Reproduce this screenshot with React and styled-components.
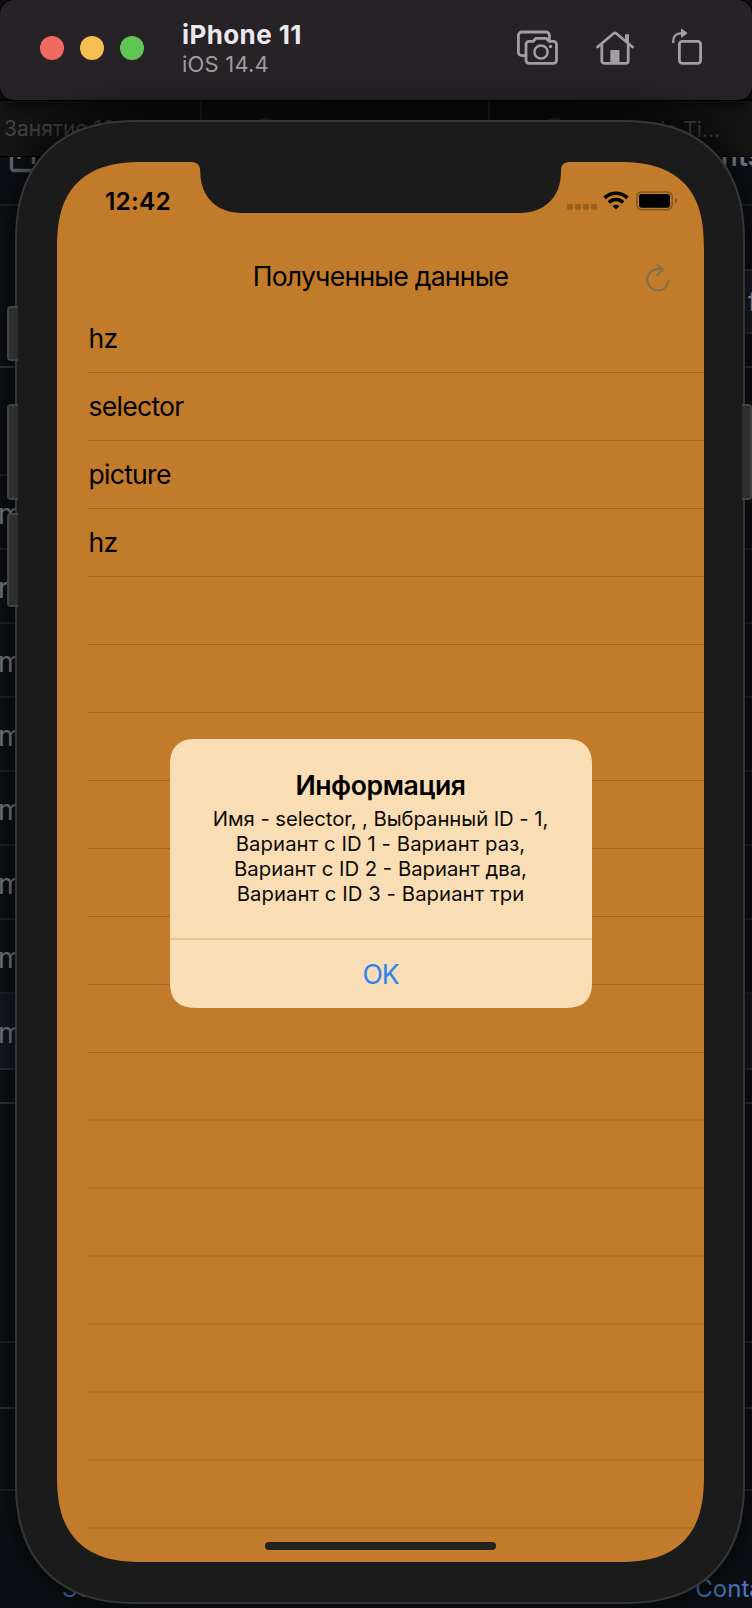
import React from "react";
import styled, { createGlobalStyle } from "styled-components";

const Global = createGlobalStyle`
  * { box-sizing: border-box; }
  body { margin: 0; background: #000; font-family: Inter, "Liberation Sans", sans-serif; }
`;

/* The desktop and the simulator share one grid cell, the simulator on top. */
const Stage = styled.main`
  display: grid;
  grid-template: 1608px / 752px;
  overflow: hidden;
  height: 1608px;
  > * { grid-area: 1 / 1; min-width: 0; }
`;

/* ---------- browser window in the back ---------- */
const Browser = styled.div`
  display: flex;
  flex-direction: column;
  padding-top: 99px;
  overflow: hidden;
  background: #0d1116;
`;

const TabStrip = styled.div`
  display: flex;
  flex: none;
  height: 58px;
  background: linear-gradient(90deg, #171617, #0d0d0d 25%, #0c0c0c 75%, #161616);
  border-top: 2px solid #000;
  border-bottom: 1px solid #000;
  color: #464646;
  font-size: 21px;
  line-height: 58px;
  white-space: nowrap;
`;

const Tab = styled.div`
  display: flex;
  align-items: ${(p) => (p.$favicon ? "flex-start" : "center")};
  justify-content: ${(p) => p.$justify || "flex-start"};
  width: ${(p) => p.$width}px;
  padding: 0 ${(p) => p.$right || 0}px 0 ${(p) => p.$left || 0}px;
  border-right: ${(p) => (p.$last ? 0 : 2)}px solid #222;
`;

const Favicon = styled.i`
  width: 28px;
  height: 28px;
  margin-top: 17px;
  border-radius: 50%;
  background: #2a2a2a;
`;

const PageRow = styled.div`
  display: flex;
  flex: none;
  justify-content: space-between;
  align-items: ${(p) => p.$align || "center"};
  height: ${(p) => p.$height}px;
  overflow: hidden;
  background: ${(p) => (p.$active ? "#161c23" : "transparent")};
  border-bottom: 2px solid ${(p) => (p.$strong ? "#33373d" : "#22262c")};
`;

const CommitText = styled.span`
  margin-left: -2px;
  padding-top: 4px;
  color: #858d97;
  font-size: 28px;
  line-height: 40px;
`;

const BoxGlyph = styled.svg`
  display: block;
  margin-left: 8px;
`;

const Heading = styled.span`
  margin: -15px -11px 0 0;
  color: #818b96;
  font-size: 28px;
  font-weight: 600;
  line-height: 28px;
`;

const FieldBox = styled.div`
  width: 12px;
  height: 65px;
  margin-top: 63px;
  padding-left: 8px;
  overflow: hidden;
  background: #1a2027;
  border: 2px solid #30353c;
  border-width: 2px 0;
  color: #aab2bb;
  font-size: 26px;
  font-weight: 500;
  line-height: 61px;
`;

const PageFooter = styled.div`
  display: flex;
  flex: 1;
  align-items: flex-start;
  justify-content: space-between;
  padding: 83px 0 0 62px;
  color: #4c82c6;
  font-size: 24px;
  line-height: 29px;
`;

const FooterLink = styled.span`
  margin-right: ${(p) => p.$overflow || 0}px;
`;

/* ---------- simulator ---------- */
const Simulator = styled.section`
  display: flex;
  flex-direction: column;
`;

const Toolbar = styled.header`
  display: flex;
  flex: none;
  align-items: center;
  height: 100px;
  padding: 0 50px 4px 40px;
  background: #262226;
  border-radius: 14px;
  box-shadow: 0 0 0 1px #000, 0 6px 18px rgba(0, 0, 0, 0.6);
`;

const Lights = styled.div`
  display: flex;
  gap: 16px;
  margin-right: 38px;
`;

const Light = styled.i`
  width: 24px;
  height: 24px;
  border-radius: 50%;
  background: ${(p) => p.$color};
`;

const DeviceLabel = styled.div`
  display: flex;
  flex: 1;
  flex-direction: column;
  padding-top: 3px;
`;

const DeviceName = styled.strong`
  color: #ebe9eb;
  font-size: 26px;
  font-weight: 700;
  letter-spacing: 0.4px;
  line-height: 29px;
`;

const DeviceOS = styled.span`
  color: #a09ba0;
  font-size: 22px;
  letter-spacing: 0.2px;
  line-height: 30px;
`;

const ToolIcons = styled.div`
  display: flex;
  align-items: center;
  gap: 35px;
  svg { display: block; }
`;

const Phone = styled.div`
  position: relative;
  width: 730px;
  height: 1484px;
  margin: 20px 0 0 15px;
  padding: 40px;
  background: #1b1b1b;
  border: 2px solid #363636;
  border-radius: 122px;
  corner-shape: superellipse(1.24);
  box-shadow: 0 0 36px 8px rgba(0, 0, 0, 0.6);
`;

/* Hardware keys stick out over the edge of the case. */
const SideKey = styled.i`
  position: absolute;
  top: ${(p) => p.$top}px;
  ${(p) => (p.$side === "left" ? "left: -10px;" : "right: -9px;")}
  width: ${(p) => (p.$side === "left" ? 11 : 10)}px;
  height: ${(p) => p.$height}px;
  background: #2e2e2e;
  border: 2px solid #424242;
  border-${(p) => (p.$side === "left" ? "right" : "left")}-width: 0;
  border-radius: ${(p) => (p.$side === "left" ? "4px 0 0 4px" : "0 4px 4px 0")};
`;

const Screen = styled.div`
  display: grid;
  grid-template: 1400px / 647px;
  width: 647px;
  height: 1400px;
  overflow: hidden;
  background: #c27b2a;
  border-radius: 88px;
  corner-shape: superellipse(1.38);
  > * { grid-area: 1 / 1; }
`;

const AppView = styled.div`
  display: flex;
  flex-direction: column;
`;

const StatusBar = styled.div`
  display: flex;
  height: 51px;
`;

const Clock = styled.div`
  width: 133px;
  padding: 27px 0 0 48px;
  font-size: 24.5px;
  font-weight: 600;
  line-height: 24px;
  letter-spacing: 0.2px;
`;

const NotchShape = styled.svg`
  display: block;
  flex: none;
`;

const Indicators = styled.div`
  display: flex;
  align-items: flex-start;
  margin-left: -4px;
  padding-top: 29px;
  svg { display: block; flex: none; }
`;

const SignalDots = styled.div`
  display: flex;
  gap: 2px;
  margin: 13px 6px 0 0;
`;

const Dot = styled.i`
  width: 6px;
  height: 6px;
  border-radius: 1.5px;
  background: #9b6323;
`;

const NavBar = styled.nav`
  display: grid;
  grid-template-columns: 60px 1fr 60px;
  align-items: center;
  height: 92px;
  padding-top: 34px;
  text-align: center;
`;

const NavTitle = styled.h1`
  margin: 0;
  font-size: 26.6px;
  font-weight: 400;
  letter-spacing: -0.75px;
  line-height: 32px;
  grid-column: 2;
`;

const RefreshIcon = styled.svg`
  display: block;
  margin: 3px 0 0 1px;
`;

const Row = styled.div`
  height: 68px;
  margin-left: 31px;
  padding-left: 0.5px;
  border-bottom: ${(p) => (p.$soft ? "2px solid #b37228" : "1px solid #9d6728")};
  font-size: 26.6px;
  letter-spacing: -0.75px;
  line-height: 67px;
`;

const HomeArea = styled.div`
  display: flex;
  justify-content: center;
  padding-top: 12.5px;
`;

const HomeIndicator = styled.i`
  width: 231px;
  height: 8px;
  border-radius: 4px;
  background: #222;
`;

const Alert = styled.div`
  display: flex;
  flex-direction: column;
  justify-self: center;
  width: 422px;
  height: 269.500px;
  margin-top: 576.500px;
  background: #f8ddb5;
  border-radius: 26px;
  corner-shape: superellipse(1.3);
  overflow: hidden;
  text-align: center;
`;

const AlertBody = styled.div`
  height: 199.500px;
  padding-top: 30.500px;
`;

const AlertTitle = styled.h2`
  margin: 0 0 5px;
  font-size: 26.6px;
  font-weight: 600;
  letter-spacing: -0.4px;
  line-height: 32px;
`;

const AlertLine = styled.div`
  color: #0c0b09;
  font-size: 20.3px;
  letter-spacing: ${(p) => p.$spacing}px;
  line-height: 25px;
`;

const AlertButton = styled.button`
  flex: 1;
  padding: 0;
  background: none;
  border: 0;
  border-top: 2px solid #e8c590;
  color: #2b83f4;
  font: 400 26.6px Inter, sans-serif;
  letter-spacing: -1px;
`;

const commits = ["m", "r", "m", "m", "m", "m", "m", "m"];
const records = ["hz", "selector", "picture", "hz"];
const ROWS = 18;

const message = [
  ["Имя - selector, , Выбранный ID - 1,", -0.06],
  ["Вариант с ID 1 - Вариант раз,", 0.08],
  ["Вариант с ID 2 - Вариант два,", 0],
  ["Вариант с ID 3 - Вариант три", 0.07],
];

function BackWindow() {
  return (
    <Browser>
      <TabStrip>
        <Tab $width={202} $left={4}>Занятие 10</Tab>
        <Tab $width={288} $left={50} $favicon><Favicon /></Tab>
        <Tab $width={262} $left={51} $right={32} $justify="space-between" $favicon $last>
          <Favicon /><span>Google Ti...</span>
        </Tab>
      </TabStrip>
      <PageRow $height={49} $align="flex-start">
        <BoxGlyph width="36" height="18" fill="none" stroke="#69717b" strokeWidth="3.4">
          <path d="M3.5 0v11a2.5 2.5 0 0 0 2.5 2.5h27M25.500 0v7M11 0v2" />
        </BoxGlyph>
        <Heading>ents</Heading>
      </PageRow>
      <PageRow $height={162} $strong $align="flex-start">
        <span />
        <FieldBox>f</FieldBox>
      </PageRow>
      <PageRow $height={108} />
      {commits.map((text, i) => (
        <PageRow key={i} $height={i === 7 ? 76 : 74} $active={i === 7} $strong={i === 7}>
          <CommitText>{text}</CommitText>
        </PageRow>
      ))}
      <PageRow $height={34} $strong />
      <PageRow $height={239} />
      <PageRow $height={66} $strong />
      <PageRow $height={82} />
      <PageFooter>
        <FooterLink>Sc</FooterLink>
        <FooterLink $overflow={-66}>Contact us</FooterLink>
      </PageFooter>
    </Browser>
  );
}

function ToolbarIcons() {
  return (
    <ToolIcons>
      <svg width="46" height="40" viewBox="514 28 46 40" fill="none" stroke="#a39ea3" strokeWidth="2.8">
        <path d="M525 55.600h-3.200a3.400 3.400 0 0 1-3.400-3.400V35.400a3.400 3.400 0 0 1 3.400-3.400h24.200a3.400 3.400 0 0 1 3.400 3.400V40" />
        <path d="M529 41.400h4.200l2-2.400a2 2 0 0 1 1.500-.7h8.800a2 2 0 0 1 1.500.7l2 2.400h4.500a3 3 0 0 1 3 3v15.900a3 3 0 0 1-3 3H529a3 3 0 0 1-3-3V44.400a3 3 0 0 1 3-3z" strokeLinejoin="round" />
        <circle cx="541" cy="52" r="6.600" strokeWidth="2.500" />
        <circle cx="550.500" cy="46.500" r="1.700" fill="#a39ea3" stroke="none" />
      </svg>
      <svg width="40" height="40" viewBox="595 28 40 40" fill="none" stroke="#a39ea3" strokeWidth="2.800" strokeLinecap="round">
        <path d="M597.500 47 L613.900 33.300a1.800 1.800 0 0 1 2.200 0L632.500 47" />
        <path d="M601.800 45v16a2.300 2.300 0 0 0 2.300 2.300h21.800a2.300 2.300 0 0 0 2.300-2.300V45" />
        <path d="M625 34.300h4v9.500l-4-3.600z" fill="#a39ea3" stroke="none" />
        <rect x="610.300" y="50" width="9.200" height="14" rx="1" fill="#a39ea3" stroke="none" />
      </svg>
      <svg width="32" height="40" viewBox="669 28 32 40" fill="none" stroke="#a39ea3" strokeWidth="2.800">
        <rect x="678.400" y="41.400" width="21.200" height="21.900" rx="2.800" />
        <path d="M672.300 43v-2.200c0-4.600 3-7.500 7.500-7.500h1" strokeWidth="2.300" />
        <path d="M680 29.300c0-.5.500-.7.900-.4l5 3.700c.4.300.4.800 0 1.100l-5 3.700c-.4.300-.9 0-.9-.4z" fill="#a39ea3" stroke="none" />
      </svg>
    </ToolIcons>
  );
}

function StatusRow() {
  return (
    <StatusBar>
      <Clock>12:42</Clock>
      <NotchShape width="381" height="51" viewBox="0 0 381 51">
        <path fill="#1b1b1b" d="M0 0C7.500 0 10 2.500 10.300 10C10.500 36 28 51 52 51H330C353 51 371 36 371 10C371 2.500 373.500 0 381 0Z" />
      </NotchShape>
      <Indicators>
        <SignalDots><Dot /><Dot /><Dot /><Dot /></SignalDots>
        <svg width="26" height="19" viewBox="0 0 26 19" fill="none" stroke="#000" strokeWidth="3.600">
          <path d="M1.600 6.900a16.300 16.300 0 0 1 22.800 0" />
          <path d="M5.900 11.400a10.200 10.200 0 0 1 14.200 0" strokeWidth="3.500" />
          <path d="M9.400 15.100a5.200 5.200 0 0 1 7.200 0L13 18.600z" fill="#000" stroke="none" />
        </svg>
        <svg width="45" height="20" viewBox="-7 0 45 20">
          <rect x="0.800" y="0.900" width="35.400" height="17.900" rx="5" fill="none" stroke="#875720" strokeWidth="1.500" />
          <rect x="3" y="3" width="31" height="13.700" rx="2.600" />
        </svg>
        <svg width="4" height="20" viewBox="0 0 4 20">
          <path d="M1 6.800c1.300.5 2 1.700 2 3s-.7 2.500-2 3z" fill="#875720" />
        </svg>
      </Indicators>
    </StatusBar>
  );
}

export default function App() {
  return (
    <Stage>
      <Global />
      <BackWindow />
      <Simulator>
        <Toolbar>
          <Lights>
            <Light $color="#f0695f" />
            <Light $color="#f6be50" />
            <Light $color="#62c554" />
          </Lights>
          <DeviceLabel>
            <DeviceName>iPhone 11</DeviceName>
            <DeviceOS>iOS 14.4</DeviceOS>
          </DeviceLabel>
          <ToolbarIcons />
        </Toolbar>
        <Phone>
          <SideKey $side="left" $top={184} $height={55} />
          <SideKey $side="left" $top={282} $height={96} />
          <SideKey $side="left" $top={391} $height={94} />
          <SideKey $side="right" $top={282} $height={96} />
          <Screen>
            <AppView>
              <StatusRow />
              <NavBar>
                <NavTitle>Полученные данные</NavTitle>
                <RefreshIcon width="26" height="30" viewBox="0 0 26 30" fill="none" stroke="#857048" strokeWidth="2.200">
                  <path d="M23.500 16.800a10.600 10.600 0 1 1-10.600-10.600h5" />
                  <path d="M11.800 1l6 5.700-6 5.900" />
                </RefreshIcon>
              </NavBar>
              {Array.from({ length: ROWS }, (_, i) => (
                <Row key={i} $soft={i > 10}>{records[i]}</Row>
              ))}
              <HomeArea><HomeIndicator /></HomeArea>
            </AppView>
            <Alert role="dialog">
              <AlertBody>
                <AlertTitle>Информация</AlertTitle>
                {message.map(([text, spacing]) => (
                  <AlertLine key={text} $spacing={spacing}>{text}</AlertLine>
                ))}
              </AlertBody>
              <AlertButton>OK</AlertButton>
            </Alert>
          </Screen>
        </Phone>
      </Simulator>
    </Stage>
  );
}
